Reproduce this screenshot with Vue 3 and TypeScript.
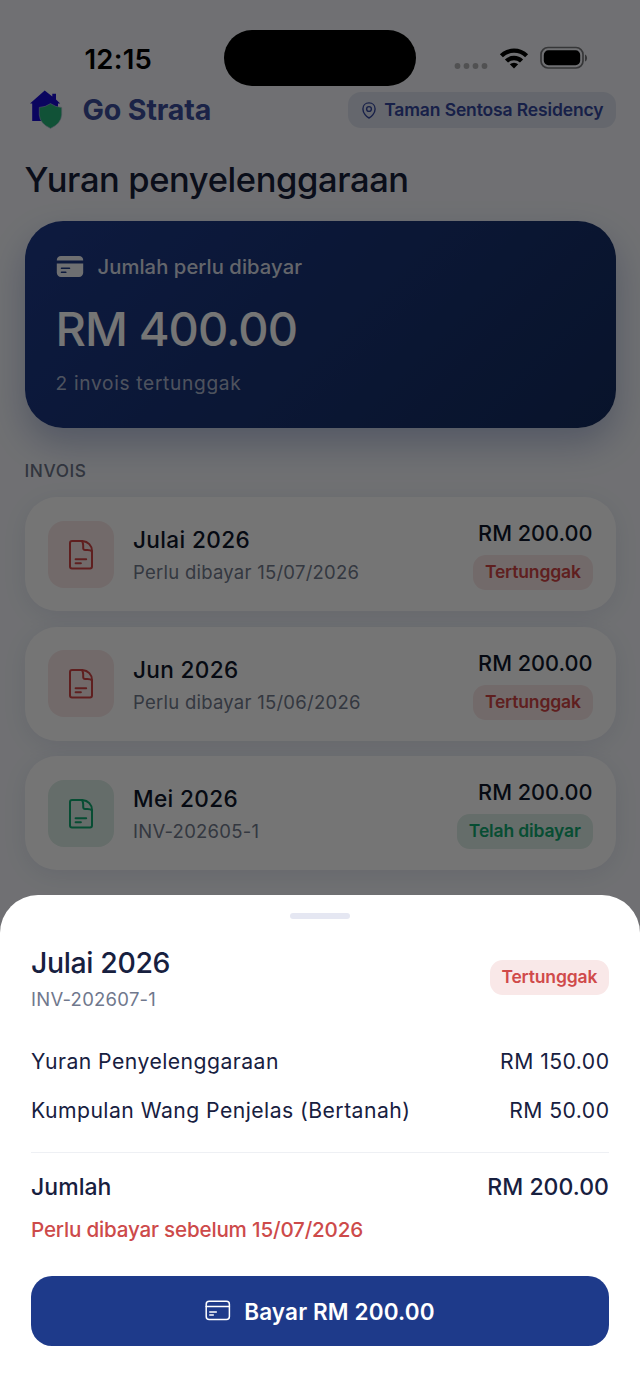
<script setup lang="ts">
type Status = 'due' | 'paid'

interface Invoice {
  period: string
  detail: string
  amount: string
  status: Status
}

const statusLabel: Record<Status, string> = {
  due: 'Tertunggak',
  paid: 'Telah dibayar',
}

const invoices: Invoice[] = [
  { period: 'Julai 2026', detail: 'Perlu dibayar 15/07/2026', amount: 'RM 200.00', status: 'due' },
  { period: 'Jun 2026', detail: 'Perlu dibayar 15/06/2026', amount: 'RM 200.00', status: 'due' },
  { period: 'Mei 2026', detail: 'INV-202605-1', amount: 'RM 200.00', status: 'paid' },
]

const lines = [
  { label: 'Yuran Penyelenggaraan', amount: 'RM 150.00' },
  { label: 'Kumpulan Wang Penjelas (Bertanah)', amount: 'RM 50.00' },
]
</script>

<template>
  <div class="phone">
    <main class="page">
      <div class="statusbar">
        <span class="clock">12:15</span>
        <span class="island"></span>
        <div class="indicators">
          <svg class="dots" width="34" height="24" viewBox="0 0 34 24">
            <circle v-for="i in 4" :key="i" :cx="3.5 + (i - 1) * 9" cy="20" r="2.9" />
          </svg>
          <svg class="wifi" width="30" height="22" viewBox="0 0 30 22">
            <path d="M.9 7.200a20.500 20.500 0 0 1 28.200 0l-3 3.100a16 16 0 0 0-22.200 0z" />
            <path d="M5.900 12.500a13.200 13.200 0 0 1 18.200 0l-3.100 3.100a8.800 8.800 0 0 0-12 0z" />
            <path d="M10.800 17.300a6.300 6.300 0 0 1 8.400 0L15 21.500z" />
          </svg>
          <svg class="battery" width="48" height="24" viewBox="0 0 48 24">
            <rect class="shell" x="1" y="1.500" width="42" height="20.500" rx="7" />
            <rect x="3.800" y="4.300" width="36.400" height="14.900" rx="4.600" />
            <path class="tip" d="M45 8.500c2.800 1 2.800 6 0 7z" />
          </svg>
        </div>
      </div>

      <header class="header">
        <div class="brand">
          <svg class="logo" width="34" height="40" viewBox="0 0 34 40">
            <path class="house" d="M14.700 .6 22.300 6.600V3.700H26V9.600L30.200 13.600H28V31H2.200V13.600H0z" />
            <path class="shield" d="M20.500 13.600q5 3.600 11.200 3.800V25q-.6 8.500-11.200 13.400Q9.900 33.500 9.300 25v-7.600q6.200-.2 11.200-3.800z" />
          </svg>
          <span class="brand-name">Go Strata</span>
        </div>
        <div class="place">
          <svg width="14" height="17" viewBox="0 0 14 17">
            <path d="M7 .9c3.700 0 6.100 2.600 6.100 6C13.100 10.900 9.400 15 7 16 4.600 15 .9 10.900.9 6.900.9 3.500 3.300.9 7 .9z" />
            <circle cx="7" cy="7" r="2.400" />
          </svg>
          <span>Taman Sentosa Residency</span>
        </div>
      </header>

      <h1 class="title">Yuran penyelenggaraan</h1>

      <section class="hero">
        <div class="hero-head">
          <svg width="28" height="23" viewBox="0 0 28 23">
            <path d="M5 1h18a4.200 4.200 0 0 1 4.200 4.600H.8A4.200 4.200 0 0 1 5 1z" />
            <path fill-rule="evenodd" d="M.8 8.500h26.400v9.300a4.200 4.200 0 0 1-4.200 4.200H5a4.200 4.200 0 0 1-4.200-4.200zM5.600 12.400a.8.800 0 0 0 0 1.700h7.800a.8.800 0 0 0 0-1.700zM5.600 16.400a.8.800 0 0 0 0 1.700h4.100a.8.800 0 0 0 0-1.700z" />
          </svg>
          <span>Jumlah perlu dibayar</span>
        </div>
        <div class="hero-amount">RM 400.00</div>
        <div class="hero-note">2 invois tertunggak</div>
      </section>

      <h2 class="section">INVOIS</h2>

      <div class="list">
        <article v-for="inv in invoices" :key="inv.period" class="card" :class="inv.status">
          <div class="tile">
            <svg width="26" height="32" viewBox="0 0 26 32">
              <path d="M4 2h10.500C20 2.500 24 6.500 24 12v15.500a2 2 0 0 1-2 2H4a2 2 0 0 1-2-2V4a2 2 0 0 1 2-2z" />
              <path d="M14 2q1.200 2 1.200 4.500v2.700a1.800 1.800 0 0 0 1.800 1.800h2.500q3 0 4.500 1.300" />
              <path d="M7.600 20.300h10.600M7.600 24.300h5.300" />
            </svg>
          </div>
          <div class="info">
            <div class="period">{{ inv.period }}</div>
            <div class="detail">{{ inv.detail }}</div>
          </div>
          <div class="side">
            <div class="amount">{{ inv.amount }}</div>
            <span class="badge" :class="inv.status">{{ statusLabel[inv.status] }}</span>
          </div>
        </article>
      </div>
    </main>

    <div class="scrim"></div>

    <section class="sheet">
      <div class="handle"></div>
      <div class="sheet-head">
        <div>
          <div class="sheet-title">Julai 2026</div>
          <div class="sheet-no">INV-202607-1</div>
        </div>
        <span class="badge due">Tertunggak</span>
      </div>
      <div class="rows">
        <div v-for="line in lines" :key="line.label" class="row">
          <span>{{ line.label }}</span>
          <span>{{ line.amount }}</span>
        </div>
      </div>
      <div class="total">
        <span>Jumlah</span>
        <span>RM 200.00</span>
      </div>
      <div class="deadline">Perlu dibayar sebelum 15/07/2026</div>
      <button class="pay" type="button">
        <svg width="26" height="22" viewBox="0 0 26 22">
          <rect x="1.200" y="1.200" width="23.200" height="18.200" rx="3" />
          <path d="M1.200 6.400h23.200M4.800 12h6.500M4.800 15h3.500" />
        </svg>
        <span>Bayar RM 200.00</span>
      </button>
    </section>
  </div>
</template>

<style>
body {
  margin: 0;
  background: #ffffff;
}
</style>

<style scoped>
.phone {
  position: relative;
  width: 640px;
  height: 1390px;
  overflow: hidden;
  box-sizing: border-box;
  background: #f3f5fa;
  font-family: Inter, 'Liberation Sans', sans-serif;
  color: #0f172a;
  white-space: nowrap;
}
.page {
  box-sizing: border-box;
  padding: 0 24.5px;
}

.statusbar {
  display: grid;
  grid-template-columns: 199.5px 191.5px 1fr;
  height: 86px;
  padding-top: 30px;
  box-sizing: border-box;
  align-items: center;
  color: #000;
}
.clock {
  padding: 2px 0 0 60px;
  font-size: 27.5px;
  font-weight: 600;
  line-height: 54px;
  letter-spacing: 0.2px;
}
.island {
  height: 56px;
  border-radius: 28px;
  background: #000;
}
.indicators {
  display: flex;
  align-items: center;
  padding-left: 38.5px;
}
.dots {
  fill: #b0b0b4;
}
.wifi {
  margin-left: 11px;
}
.battery {
  margin-left: 11px;
}
.battery .shell {
  fill: none;
  stroke: #77777b;
  stroke-width: 1.7;
}
.battery .tip {
  fill: #77777b;
}

.header {
  display: flex;
  align-items: center;
  justify-content: space-between;
  height: 48px;
}
.brand {
  display: flex;
  align-items: center;
  padding-left: 5.5px;
}
.logo .house {
  fill: #1a0bd0;
}
.logo .shield {
  fill: #25b478;
  stroke: #b9bcd8;
  stroke-width: 0.6;
}
.brand-name {
  margin-left: 18.5px;
  font-size: 28.6px;
  font-weight: 700;
  line-height: 40px;
  letter-spacing: -0.15px;
  color: #3b4e9c;
}
.place {
  display: flex;
  align-items: center;
  gap: 8px;
  height: 36px;
  padding: 0 12px 0 14px;
  border-radius: 13px;
  background: #dce0ed;
  color: #34479e;
  font-size: 17.5px;
  font-weight: 600;
  letter-spacing: -0.13px;
}
.place span {
  margin-top: -1px;
}
.place svg {
  fill: none;
  stroke: currentColor;
  stroke-width: 1.4;
}

.title {
  margin: 21px 0 0;
  font-size: 34.5px;
  font-weight: 500;
  line-height: 50px;
  letter-spacing: -0.4px;
  color: #17203a;
}

.hero {
  box-sizing: border-box;
  height: 207px;
  margin-top: 16px;
  padding: 31px;
  border-radius: 38px;
  background: linear-gradient(135deg, #1e3a8a, #132b5e);
  box-shadow: 0 16px 34px rgba(30, 58, 138, 0.28);
  color: #fff;
}
.hero-head {
  display: flex;
  align-items: center;
  gap: 14px;
  height: 29px;
  font-size: 20.2px;
  font-weight: 500;
  letter-spacing: 0.08px;
  color: rgba(255, 255, 255, 0.85);
}
.hero-head svg {
  fill: rgba(255, 255, 255, 0.93);
}
.hero-amount {
  margin-top: 17px;
  font-size: 47px;
  font-weight: 500;
  line-height: 62px;
  letter-spacing: -0.9px;
}
.hero-note {
  margin-top: 9px;
  font-size: 19.1px;
  line-height: 28px;
  letter-spacing: 0.7px;
  color: rgba(255, 255, 255, 0.65);
}

.section {
  margin: 29px 0 0;
  font-size: 17.3px;
  font-weight: 500;
  line-height: 28px;
  letter-spacing: 0.6px;
  color: #6b7488;
}

.list {
  display: flex;
  flex-direction: column;
  gap: 15.5px;
  margin-top: 12px;
}
.card {
  display: flex;
  align-items: center;
  box-sizing: border-box;
  height: 114px;
  padding: 0 23px 0 23.5px;
  border-radius: 32px;
  background: #fff;
  box-shadow: 0 5px 24px rgba(30, 50, 100, 0.09);
}
.tile {
  display: flex;
  align-items: center;
  justify-content: center;
  box-sizing: border-box;
  width: 65.5px;
  height: 67px;
  padding-top: 1px;
  border-radius: 16px;
}
.tile svg {
  fill: none;
  stroke: currentColor;
  stroke-width: 2;
  stroke-linecap: round;
  stroke-linejoin: round;
}
.card.due .tile,
.badge.due {
  background: #f9e8e8;
  color: #cf4545;
}
.card.paid .tile,
.badge.paid {
  background: #dcede6;
  color: #10a870;
}
.info {
  flex: 1;
  margin-left: 19.5px;
  padding-top: 4px;
}
.period {
  font-size: 22.6px;
  font-weight: 500;
  line-height: 32px;
  letter-spacing: 0.35px;
}
.detail {
  font-size: 18.5px;
  line-height: 32px;
  letter-spacing: 0.25px;
  color: #717a8d;
}
.side {
  display: flex;
  flex-direction: column;
  align-items: flex-end;
}
.amount {
  font-size: 21.7px;
  font-weight: 500;
  line-height: 31px;
}
.badge {
  box-sizing: border-box;
  height: 35px;
  margin-top: 6px;
  padding: 0 11.8px;
  border-radius: 12.7px;
  font-size: 17.5px;
  font-weight: 600;
  line-height: 33.5px;
  letter-spacing: -0.15px;
}

.scrim {
  position: absolute;
  inset: 0;
  background: rgba(0, 0, 0, 0.54);
}

.sheet {
  position: absolute;
  left: 0;
  right: 0;
  top: 895px;
  bottom: 0;
  box-sizing: border-box;
  padding: 18px 31px 0;
  border-radius: 38px 38px 0 0;
  background: #fff;
  color: #17203f;
}
.handle {
  width: 60px;
  height: 6px;
  margin: 0 auto;
  border-radius: 3px;
  background: #e5e7f2;
}
.sheet-head {
  display: flex;
  align-items: center;
  justify-content: space-between;
  margin-top: 24px;
}
.sheet-head .badge {
  margin-top: -4px;
  color: #d04a4a;
}
.sheet-title {
  font-size: 28.4px;
  font-weight: 500;
  line-height: 40px;
  letter-spacing: -0.35px;
}
.sheet-no {
  font-size: 18.5px;
  line-height: 33px;
  letter-spacing: 0.25px;
  color: #70788d;
}
.rows {
  margin-top: 20.5px;
  padding-bottom: 17.5px;
  border-bottom: 1.5px solid #eef0f4;
}
.row {
  display: flex;
  justify-content: space-between;
  font-size: 21.2px;
  line-height: 49px;
  letter-spacing: 0.45px;
}
.row span:last-child {
  margin-right: -0.5px;
}
.total {
  display: flex;
  justify-content: space-between;
  margin-top: 14px;
  font-size: 23px;
  font-weight: 500;
  line-height: 41px;
  letter-spacing: 0.05px;
}
.deadline {
  margin-top: 5px;
  font-size: 20.6px;
  font-weight: 500;
  line-height: 34px;
  letter-spacing: -0.18px;
  color: #cd4a4a;
}
.pay {
  display: flex;
  align-items: center;
  justify-content: center;
  gap: 13px;
  width: 100%;
  height: 70px;
  margin-top: 29px;
  padding: 0;
  border: 0;
  border-radius: 21px;
  background: #1e3a8a;
  color: #fff;
  font: 600 22.5px/68px Inter, 'Liberation Sans', sans-serif;
  letter-spacing: 0.15px;
}
.pay span {
  padding-top: 2px;
}
.pay svg {
  fill: none;
  stroke: currentColor;
  stroke-width: 1.5;
  stroke-linecap: round;
}
</style>
